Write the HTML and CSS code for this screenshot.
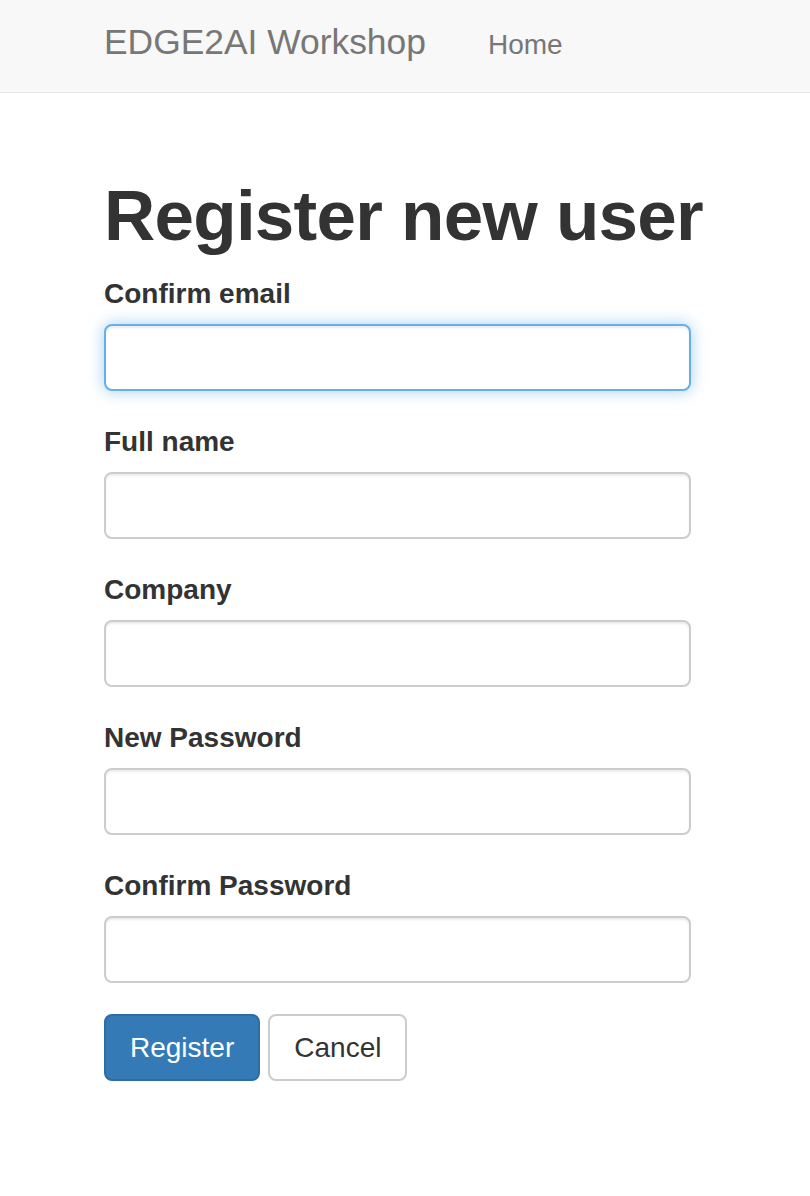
FILE: index.html
```html
<!DOCTYPE html>
<html lang="en">
<head>
<meta charset="utf-8">
<title>Register new user</title>
<link rel="stylesheet" href="styles.css">
</head>
<body>
<nav class="navbar">
  <div class="navbar-inner">
    <a class="brand" href="#">EDGE2AI Workshop</a>
    <a class="nav-link" href="#">Home</a>
  </div>
</nav>
<main class="container">
  <h1 class="title">Register new user</h1>
  <form class="form">
    <div class="form-group">
      <label class="label" for="email">Confirm email</label>
      <input class="input input-focus" id="email" type="text">
    </div>
    <div class="form-group">
      <label class="label" for="name">Full name</label>
      <input class="input" id="name" type="text">
    </div>
    <div class="form-group">
      <label class="label" for="company">Company</label>
      <input class="input" id="company" type="text">
    </div>
    <div class="form-group">
      <label class="label" for="pw">New Password</label>
      <input class="input" id="pw" type="password">
    </div>
    <div class="form-group">
      <label class="label" for="pw2">Confirm Password</label>
      <input class="input" id="pw2" type="password">
    </div>
    <div class="actions">
      <button class="btn btn-primary" type="button">Register</button>
      <button class="btn btn-default" type="button">Cancel</button>
    </div>
  </form>
</main>
</body>
</html>
```
FILE: styles.css
```css
* { box-sizing: border-box; }
html, body { margin: 0; padding: 0; background: #fff; }
body {
  font-family: "Liberation Sans", Arial, Helvetica, sans-serif;
  color: #333;
}
.navbar {
  height: 93px;
  background: #f8f8f8;
  border-bottom: 1px solid #e7e7e7;
}
.navbar-inner {
  display: flex;
  align-items: baseline;
  padding-left: 104px;
  padding-top: 22px;
}
.brand {
  font-size: 35.4px;
  line-height: 40px;
  color: #777;
  text-decoration: none;
}
.nav-link {
  margin-left: 62px;
  font-size: 28px;
  line-height: 40px;
  color: #777;
  text-decoration: none;
}
.container {
  width: 587px;
  margin-left: 104px;
}
.title {
  margin: 84px 0 19px;
  font-size: 71px;
  line-height: 78px;
  font-weight: bold;
  letter-spacing: -0.75px;
  white-space: nowrap;
  color: #333;
}
.form { margin: 0; }
.form-group { margin-bottom: 31px; }
.label {
  display: block;
  font-size: 28px;
  line-height: 40px;
  font-weight: bold;
  margin-bottom: 10px;
  color: #333;
}
.input {
  display: block;
  width: 100%;
  height: 67px;
  border: 2px solid #ccc;
  border-radius: 8px;
  background: #fff;
  box-shadow: inset 0 2px 2px rgba(0,0,0,0.075);
  outline: none;
  font-size: 28px;
  padding: 0 24px;
}
.input-focus {
  border-color: #66afe9;
  box-shadow: inset 0 2px 2px rgba(0,0,0,0.075), 0 0 16px rgba(102,175,233,0.6);
}
.actions {
  display: flex;
  gap: 8px;
}
.btn {
  height: 67px;
  padding: 0 24px;
  border: 2px solid transparent;
  border-radius: 8px;
  font-family: "Liberation Sans", Arial, Helvetica, sans-serif;
  font-size: 28px;
  line-height: 1;
  cursor: pointer;
}
.btn-primary {
  background: #337ab7;
  border-color: #2e6da4;
  color: #fff;
}
.btn-default {
  background: #fff;
  border-color: #ccc;
  color: #333;
}
```
